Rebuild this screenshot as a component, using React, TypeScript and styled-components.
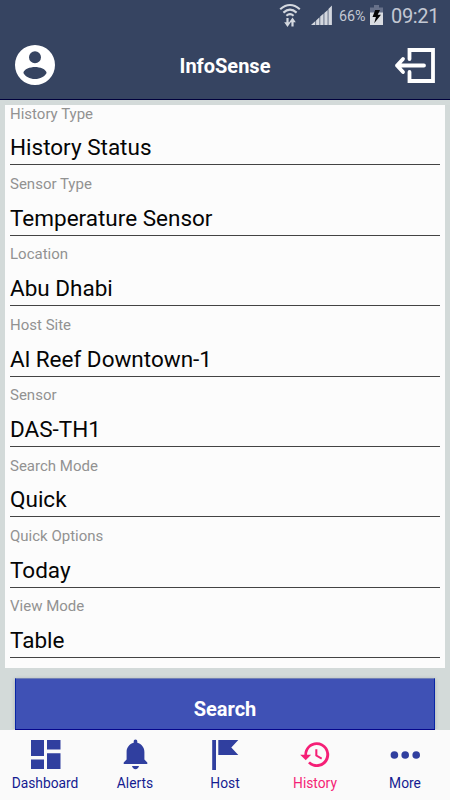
import React from 'react';
import styled, { createGlobalStyle } from 'styled-components';

const GlobalStyle = createGlobalStyle`
  * { box-sizing: border-box; }
  body { margin: 0; background: #d3dad9; }
`;

const Screen = styled.div`
  width: 450px;
  height: 800px;
  display: flex;
  flex-direction: column;
  overflow: hidden;
  background: #d3dad9;
  font-family: Roboto, sans-serif;
`;

const Header = styled.header`
  height: 100px;
  flex: none;
  background: #364461;
  border-bottom: 1px solid #00003c;
`;

const StatusBar = styled.div`
  height: 30px;
  display: flex;
  align-items: center;
  justify-content: flex-end;
  padding: 1px 10px 0 0;
  color: #c3c8d3;
  svg { flex: none; }
`;

const Percent = styled.span`
  width: 31px;
  font-size: 14.3px;
  letter-spacing: 0;
  white-space: nowrap;
`;

const Clock = styled.span`
  width: 49px;
  margin-left: 8px;
  font-size: 20px;
  letter-spacing: -0.35px;
  white-space: nowrap;
`;

const TitleBar = styled.div`
  height: 69px;
  display: grid;
  grid-template-columns: 60px 1fr 60px;
  align-items: center;
  svg { display: block; }
`;

const Title = styled.h1`
  margin: 2px 0 0;
  color: #fff;
  font-size: 20px;
  line-height: 24px;
  font-weight: 700;
  text-align: center;
`;

const Content = styled.main`
  flex: 1;
  min-height: 0;
  overflow: hidden;
  padding: 5px 5px 0;
`;

const Card = styled.section`
  height: 563px;
  overflow: hidden;
  background: #fcfcfc;
  padding: 0 5px 10px;
`;

const Fields = styled.div`
  margin-top: -10.1px;
`;

const Field = styled.div`
  height: 70.43px;
  padding-top: 9.6px;
  border-bottom: 1px solid #444;
`;

const Label = styled.div`
  height: 26.8px;
  color: #929292;
  font-size: 15px;
  line-height: 18px;
`;

const Value = styled.div`
  color: #050505;
  font-size: 22.5px;
  line-height: 32px;
`;

const SearchButton = styled.button`
  display: block;
  width: 420px;
  height: 60px;
  margin: 10px 10px 0;
  padding: 0;
  border: 0;
  border-top: 1px solid #7180b5;
  border-right: 1px solid #0926a5;
  border-left: 1px solid #0926a5;
  background: #3f51b5;
  box-shadow: 0 1px 4px rgba(0, 0, 0, 0.2);
  color: #fff;
  font: 700 20px/58px Roboto, sans-serif;
`;

const TabBar = styled.nav`
  height: 70px;
  flex: none;
  display: grid;
  grid-template-columns: repeat(5, 1fr);
  background: #fafafa;
`;

const ButtonEdge = styled.div`
  height: 1px;
  flex: none;
  margin: 0 15px;
  background: #06068c;
`;

const Tab = styled.div<{ $active?: boolean }>`
  display: flex;
  flex-direction: column;
  align-items: center;
  padding-top: 8px;
  color: ${p => (p.$active ? '#f51f76' : '#151c91')};
  font-size: 13.8px;
  line-height: 16px;
  white-space: nowrap;
  svg { display: block; margin-bottom: 4px; fill: ${p => (p.$active ? '#f51f76' : '#303f9f')}; }
`;

const fields = [
  ['History Type', 'History Status'],
  ['Sensor Type', 'Temperature Sensor'],
  ['Location', 'Abu Dhabi'],
  ['Host Site', 'Al Reef Downtown-1'],
  ['Sensor', 'DAS-TH1'],
  ['Search Mode', 'Quick'],
  ['Quick Options', 'Today'],
  ['View Mode', 'Table'],
];

const WifiIcon = () => (
  <svg width="22" height="25" viewBox="0 0 22 25" fill="none" stroke="#d4d8df" strokeWidth="2.1">
    <path d="M1.2 6.2Q11-2.2 20.8 6.2M4.4 9.6Q11 3.8 17.6 9.6M7.4 12.8Q11 9.6 14.6 12.8" />
    <path d="M8.5 15v6M13.5 23.5v-6" strokeWidth="2.2" />
    <path d="M5.2 19.2h6.6l-3.3 4.8zM10.2 19.2h6.6l-3.3-4.8z" fill="#d4d8df" stroke="none" />
  </svg>
);

const SignalIcon = () => (
  <svg width="21" height="21" viewBox="0 0 21 21" fill="#d4d8df">
    <path d="M0 20 4.4 16v4zM5.1 15.4 8.5 12.3V20H5.1zM9.2 11.6l3.4-3V20H9.2zM13.3 7.9l3.4-3V20h-3.4zM17.4 4.1l3.5-3.6V20h-3.5z" />
  </svg>
);

const BatteryIcon = () => (
  <svg width="13" height="21" viewBox="0 0 13 21">
    <path d="M4 0h5v2.5h4V20H0V2.5h4z" fill="#67718a" />
    <path d="M0 7.5h13V20H0z" fill="#d9dce1" />
    <path d="M5.2 5 2.5 12h3.4l-1.7 6.3 6.8-8.6H7.7L10 5z" fill="#050505" />
  </svg>
);

const tabs = [
  {
    name: 'Dashboard',
    icon: <path d="M2 2h13v16H2zM18 2h13.5v9.5H18zM2 21.5h13V31H2zM18 15.2h13.5V31H18z" />,
  },
  {
    name: 'Alerts',
    icon: <path d="M16.5 1.5c-1.2 0-1.8.9-1.8 2v1.3C10.3 6 7.6 9.7 7.6 14v7.5L4.7 24.4v1.7h23.6v-1.7l-2.9-2.9V14c0-4.3-2.7-8-7.1-9.2V3.5c0-1.1-.6-2-1.8-2zM13 28h7c-.4 1.9-1.8 3.2-3.5 3.2S13.4 29.9 13 28z" />,
  },
  {
    name: 'Host',
    icon: <path d="M3.2 2H7v30H3.2zM9.3 2H29.3l-7 7.5 7 7.5h-20z" />,
  },
  {
    name: 'History',
    icon: <g transform="translate(-.2 .2) scale(1.375)"><path d="M13 3a9 9 0 0 0-9 9H1l3.9 3.9.1.1 4-4H6a7 7 0 1 1 2.1 4.9l-1.4 1.4A9 9 0 1 0 13 3zm-1 5v5l4.3 2.5.7-1.2-3.5-2.1V8z" /></g>,
  },
  {
    name: 'More',
    icon: <g><circle cx="5.4" cy="17" r="3.8" /><circle cx="16.2" cy="17" r="3.8" /><circle cx="27.2" cy="17" r="3.8" /></g>,
  },
];

const AccountIcon = styled.svg`
  margin: 0 0 0 11px;
`;

const ExitIcon = styled.svg`
  margin-left: 3px;
`;

const StatusIcon = styled.span<{ $gap: number }>`
  display: flex;
  margin-right: ${p => p.$gap}px;
`;

export default function App() {
  return (
    <>
      <GlobalStyle />
      <Screen>
        <Header>
          <StatusBar>
            <StatusIcon $gap={10}><WifiIcon /></StatusIcon>
            <StatusIcon $gap={7}><SignalIcon /></StatusIcon>
            <Percent>66%</Percent>
            <BatteryIcon />
            <Clock>09:21</Clock>
          </StatusBar>
          <TitleBar>
            <AccountIcon width="48" height="48" viewBox="0 0 24 24" fill="#fff">
              <path
                fillRule="evenodd"
                d="M12 2a10 10 0 1 0 0 20 10 10 0 0 0 0-20zm0 3.1a3 3 0 1 1 0 6 3 3 0 0 1 0-6zM6.2 16c.2-2 3.4-3 5.8-3s5.6 1 5.8 3c-1 1.8-3.1 3-5.8 3s-4.8-1.2-5.8-3z"
              />
            </AccountIcon>
            <Title>InfoSense</Title>
            <ExitIcon width="44" height="38" viewBox="0 0 44 38" fill="none" stroke="#fff" strokeWidth="3.8">
              <path d="M16.5 13V4H40v31H16.5v-9" strokeLinecap="round" />
              <path d="M31 19.5H4M10 13l-6 6.5L10 26" strokeLinecap="round" strokeLinejoin="round" />
            </ExitIcon>
          </TitleBar>
        </Header>
        <Content>
          <Card>
            <Fields>
              {fields.map(([label, value]) => (
                <Field key={label}>
                  <Label>{label}</Label>
                  <Value>{value}</Value>
                </Field>
              ))}
            </Fields>
          </Card>
          <SearchButton>Search</SearchButton>
        </Content>
        <ButtonEdge />
        <TabBar>
          {tabs.map(tab => (
            <Tab key={tab.name} $active={tab.name === 'History'}>
              <svg width="33" height="33" viewBox="0 0 33 33">{tab.icon}</svg>
              <span>{tab.name}</span>
            </Tab>
          ))}
        </TabBar>
      </Screen>
    </>
  );
}
